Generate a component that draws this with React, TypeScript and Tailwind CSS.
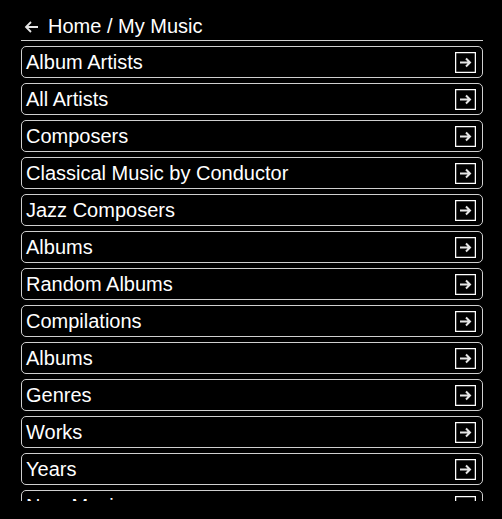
const items = [
  "Album Artists",
  "All Artists",
  "Composers",
  "Classical Music by Conductor",
  "Jazz Composers",
  "Albums",
  "Random Albums",
  "Compilations",
  "Albums",
  "Genres",
  "Works",
  "Years",
  "New Music",
  "Recently Played",
];

function EnterIcon() {
  return (
    <svg width="21" height="21" viewBox="0 0 21 21" className="shrink-0">
      <rect x="0.5" y="0.5" width="20" height="20" fill="none" stroke="#fff" strokeWidth="1.5" />
      <path d="M5 10.5h10M11 6.5l4 4-4 4" fill="none" stroke="#e5e5e5" strokeWidth="2" />
    </svg>
  );
}

export default function App() {
  return (
    <div className="h-[519px] overflow-hidden bg-black text-white font-['Liberation_Sans',Arial,sans-serif]">
      <div className="ml-[21px] w-[462px]">
        {/* Breadcrumb */}
        <div className="h-[41px] border-b border-[#cfcfcf] pt-[15px] flex items-start">
          <svg width="16" height="14" viewBox="0 0 16 14" className="ml-[3px] mt-[5px]">
            <path d="M14 7H2M7 2L2 7l5 5" fill="none" stroke="#e5e5e5" strokeWidth="1.8" />
          </svg>
          <span className="ml-[8px] text-[20px] leading-[23px]">Home / My Music</span>
        </div>

        {/* List */}
        <div className="mt-[5px] h-[455px] overflow-hidden flex flex-col gap-[5px]">
          {items.map((name, i) => (
            <div
              key={i}
              className="h-[32px] shrink-0 rounded-[5px] border border-[#cfcfcf] pl-[4px] pr-[6px] flex items-center justify-between"
            >
              <span className="text-[20px] leading-[23px]">{name}</span>
              <EnterIcon />
            </div>
          ))}
        </div>
      </div>
    </div>
  );
}
